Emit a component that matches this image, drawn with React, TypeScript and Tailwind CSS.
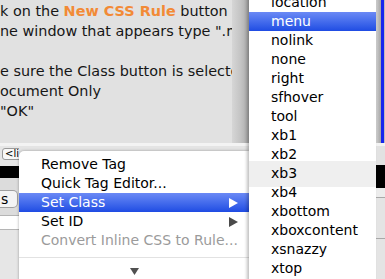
import React from 'react'

const classes = [
  'location',
  'menu',
  'nolink',
  'none',
  'right',
  'sfhover',
  'tool',
  'xb1',
  'xb2',
  'xb3',
  'xb4',
  'xbottom',
  'xboxcontent',
  'xsnazzy',
  'xtop',
]

function Arrow({ white }: { white?: boolean }) {
  return (
    <svg width="9" height="10" viewBox="0 0 9 10" className="shrink-0">
      <path d="M0 0 L9 5 L0 10 Z" fill={white ? '#ffffff' : '#4a4a4a'} />
    </svg>
  )
}

function ContextMenu() {
  return (
    <div className="absolute left-[19px] top-[151px] w-[230px] h-[140px] bg-white rounded-tl-[5px] shadow-[0_0_3px_rgba(0,0,0,0.35)] pt-[4px] text-[14px] leading-[19px] text-black flex flex-col">
      <div className="h-[19px] pl-[22px]">Remove Tag</div>
      <div className="h-[19px] pl-[22px]">Quick Tag Editor...</div>
      <div className="h-[19px] pl-[22px] pr-[11px] flex items-center justify-between text-white bg-gradient-to-b from-[#6b89f5] to-[#1f4be3]">
        <span>Set Class</span>
        <Arrow white />
      </div>
      <div className="h-[19px] pl-[22px] pr-[11px] flex items-center justify-between">
        <span>Set ID</span>
        <Arrow />
      </div>
      <div className="h-[19px] pl-[22px] text-[#9b9b9b]">Convert Inline CSS to Rule...</div>
      <div className="mt-[7px] h-px bg-[#e2e2e2]" />
      <div className="mt-[10px] flex justify-center">
        <svg width="9" height="7" viewBox="0 0 9 7">
          <path d="M0 0 L9 0 L4.5 7 Z" fill="#505050" />
        </svg>
      </div>
    </div>
  )
}

function ClassMenu() {
  return (
    <div className="absolute left-[249px] top-[-7px] w-[127px] h-[300px] bg-white shadow-[-2px_0_3px_rgba(0,0,0,0.25)] text-[14px] leading-[19px] text-black">
      <div className="absolute left-0 right-0 top-[168px] h-[26px] bg-[#efefef]" />
      <div className="relative flex flex-col">
        {classes.map((c) =>
          c === 'menu' ? (
            <div key={c} className="h-[19px] pl-[22px] text-white bg-gradient-to-b from-[#6b89f5] to-[#1f4be3]">
              {c}
            </div>
          ) : (
            <div key={c} className="h-[19px] pl-[22px]">
              {c}
            </div>
          )
        )}
      </div>
    </div>
  )
}

export default function App() {
  return (
    <div className="relative w-[385px] h-[279px] overflow-hidden bg-[#e4e4e4] font-['DejaVu_Sans',sans-serif]">
      <div className="flex flex-col">
        <div className="flex h-[143px] bg-[#e1e1e1]">
          <div className="w-[232px] overflow-hidden pt-[1px] text-[14.4px] leading-[20px] text-[#161616] whitespace-nowrap">
            <div>
              k on the <b className="text-[#f28a36]">New CSS Rule</b> button
            </div>
            <div>ne window that appears type ".menu"</div>
            <div>&nbsp;</div>
            <div>e sure the Class button is selected</div>
            <div>ocument Only</div>
            <div>"OK"</div>
          </div>
          <div className="w-[17px] bg-gradient-to-r from-[#d6d6d6] via-[#c4c4c4] to-[#a9a9a9]" />
          <div className="w-[127px]" />
          <div className="w-[9px] flex">
            <div className="w-[5px] bg-gradient-to-r from-[#cfcfcf] to-[#a5a5a5]" />
            <div className="w-[3px] bg-[#1626ee]" />
            <div className="w-px bg-[#bdbdbd]" />
          </div>
        </div>
        <div className="h-[3px] bg-[#f3f3f3]" />
        <div className="flex h-[133px]">
          <div className="w-[19px] flex flex-col">
            <div className="h-[20px] bg-[#e6e6e6] pt-[2px]">
              <div className="ml-[2px] w-[26px] h-[12px] rounded-[3px] border border-[#9a9a9a] bg-[#f8f8f8] text-[10px] leading-[10px] pl-[2px] text-black">
                &lt;li&gt;
              </div>
            </div>
            <div className="h-[12px] bg-black" />
            <div className="h-[12px] bg-[#dcdcdc]" />
            <div className="h-[18px] bg-[#dcdcdc]">
              <div className="w-[18px] h-[18px] rounded-r-[5px] border border-l-0 border-[#a0a0a0] bg-[#f4f4f4] text-[14px] leading-[16px] pl-[1px] text-black">
                s
              </div>
            </div>
            <div className="h-[7px] bg-[#dcdcdc]" />
            <div className="h-[15px] bg-white border-y border-[#b5b5b5]" />
            <div className="flex-1 bg-[#e6e6e6]" />
          </div>
          <div className="flex-1 bg-[#e4e4e4]" />
          <div className="w-[9px] flex flex-col bg-[#dedede]">
            <div className="h-[19px] bg-[#e2e2e2]" />
            <div className="h-[23px] bg-black" />
            <div className="h-[9px] bg-[#ececec]" />
            <div className="h-px bg-[#a8a8a8]" />
            <div className="h-[40px] bg-[#e4e4e4]" />
            <div className="h-px bg-[#a8a8a8]" />
            <div className="flex-1 bg-[#e4e4e4]" />
          </div>
        </div>
      </div>
      <ContextMenu />
      <ClassMenu />
    </div>
  )
}
